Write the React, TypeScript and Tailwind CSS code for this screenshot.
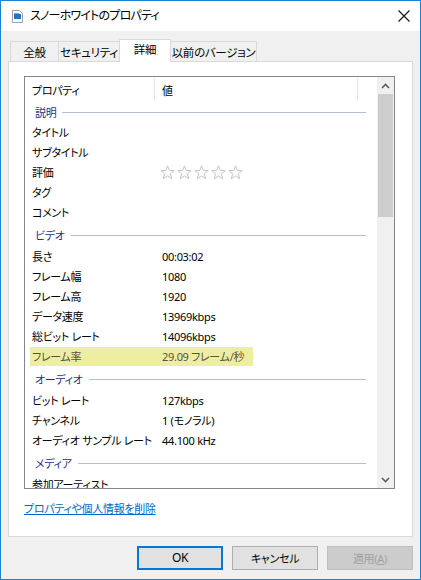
import React from 'react';

const font = "[font-family:'Noto_Sans','Noto_Sans_CJK_JP',sans-serif] [font-feature-settings:'palt']";

type Row =
  | { kind: 'group'; label: string; first?: boolean }
  | { kind: 'row'; label: string; value?: string; stars?: boolean; hl?: boolean };

const rows: Row[] = [
  { kind: 'group', label: '説明', first: true },
  { kind: 'row', label: 'タイトル' },
  { kind: 'row', label: 'サブタイトル' },
  { kind: 'row', label: '評価', stars: true },
  { kind: 'row', label: 'タグ' },
  { kind: 'row', label: 'コメント' },
  { kind: 'group', label: 'ビデオ' },
  { kind: 'row', label: '長さ', value: '00:03:02' },
  { kind: 'row', label: 'フレーム幅', value: '1080' },
  { kind: 'row', label: 'フレーム高', value: '1920' },
  { kind: 'row', label: 'データ速度', value: '13969kbps' },
  { kind: 'row', label: '総ビット レート', value: '14096kbps' },
  { kind: 'row', label: 'フレーム率', value: '29.09 フレーム/秒', hl: true },
  { kind: 'group', label: 'オーディオ' },
  { kind: 'row', label: 'ビット レート', value: '127kbps' },
  { kind: 'row', label: 'チャンネル', value: '1 (モノラル)' },
  { kind: 'row', label: 'オーディオ サンプル レート', value: '44.100 kHz' },
  { kind: 'group', label: 'メディア' },
  { kind: 'row', label: '参加アーティスト' },
];

function Star() {
  return (
    <svg width="15" height="15" viewBox="0 0 15 15">
      <polygon
        points="7.5,0.8 9.3,5.4 14.2,5.6 10.4,8.8 11.7,13.8 7.5,11 3.3,13.8 4.6,8.8 0.8,5.6 5.7,5.4"
        fill="#fafafa"
        stroke="#c6c6c6"
        strokeWidth="1"
      />
    </svg>
  );
}

function Chevron({ up }: { up?: boolean }) {
  return (
    <svg width="9" height="6" viewBox="0 0 9 6">
      <polyline
        points={up ? '1,5 4.5,1.5 8,5' : '1,1 4.5,4.5 8,1'}
        fill="none"
        stroke="#606060"
        strokeWidth="1.6"
      />
    </svg>
  );
}

function ListRow({ row }: { row: Row }) {
  if (row.kind === 'group') {
    return (
      <div className={`flex items-center ${row.first ? 'h-[20px]' : 'h-[24px] pt-[2px]'}`}>
        <span className="pl-[10px] text-[#1e3287]">{row.label}</span>
        <div className="ml-[6px] mr-[11px] h-px flex-1 bg-[#b4bfd6]" />
      </div>
    );
  }
  if (row.hl) {
    return (
      <div className="flex h-[20px] items-center">
        <div className="ml-[5px] flex h-[19px] w-[223px] items-center bg-[#eeeea2] text-[#55553a]">
          <span className="w-[125px] pl-[2px] whitespace-nowrap">{row.label}</span>
          <span className="pl-[7px] whitespace-nowrap">{row.value}</span>
        </div>
      </div>
    );
  }
  return (
    <div className="flex h-[20px] items-center pt-px text-black">
      <span className="w-[130px] pl-[7px] whitespace-nowrap">{row.label}</span>
      {row.stars ? (
        <span className="flex gap-[2px] pl-[5px]">
          <Star />
          <Star />
          <Star />
          <Star />
          <Star />
        </span>
      ) : (
        <span className="pl-[7px] whitespace-nowrap">{row.value}</span>
      )}
    </div>
  );
}

export default function App() {
  return (
    <div className={`${font} flex h-[580px] w-[421px] flex-col border border-[#1883d7] bg-[#f0f0f0] text-[11px] leading-none tracking-[-0.3px]`}>
      {/* title bar */}
      <div className="flex h-[30px] shrink-0 items-center bg-white">
        <svg className="ml-[11px]" width="11" height="13" viewBox="0 0 11 13">
          <path d="M0.5 0.5 H7.5 L10.5 3.5 V12.5 H0.5 Z" fill="#fff" stroke="#a0a0a0" />
          <rect x="2" y="4" width="7" height="5" fill="#1c74cc" />
          <rect x="2" y="3" width="5" height="1" fill="#63a5e6" />
        </svg>
        <span className="ml-[7px] text-[12px] tracking-[-0.8px] text-black">スノーホワイトのプロパティ</span>
        <svg className="ml-auto mr-[10px]" width="12" height="12" viewBox="0 0 12 12">
          <path d="M0.5 0.5 L11.5 11.5 M11.5 0.5 L0.5 11.5" stroke="#111" strokeWidth="1.1" />
        </svg>
      </div>

      {/* body */}
      <div className="flex flex-1 flex-col px-[7px] pt-[8px]">
        {/* tabs */}
        <div className="relative z-10 flex h-[22px] items-end pl-[2px] text-[11.5px]">
          <div className="flex h-[20px] w-[48px] items-center justify-center whitespace-nowrap border-l border-t border-[#d9d9d9] pt-[2px]">全般</div>
          <div className="flex h-[20px] w-[61px] items-center justify-center whitespace-nowrap border-l border-t border-[#d9d9d9] pt-[2px]">セキュリティ</div>
          <div className="-mb-px flex h-[23px] w-[52px] items-center justify-center whitespace-nowrap border-x border-t border-[#d9d9d9] bg-white pb-[2px]">詳細</div>
          <div className="flex h-[20px] w-[86px] items-center justify-center whitespace-nowrap border-r border-t border-[#d9d9d9] pt-[2px]">以前のバージョン</div>
        </div>

        {/* panel */}
        <div className="flex h-[476px] flex-col border border-[#d9d9d9] bg-white px-[15px] pt-[14px]">
          <div className="flex h-[413px] w-[371px] border border-[#828790]">
            <div className="flex-1 overflow-hidden">
              <div className="flex h-[25px] items-stretch">
                <div className="my-px flex w-[130px] items-center border-r border-[#e5e5e5] pl-[7px] pt-[2px]">プロパティ</div>
                <div className="my-px flex w-[203px] items-center border-r border-[#e5e5e5] pl-[7px] pt-[2px]">値</div>
              </div>
              {rows.map((r, i) => (
                <ListRow key={i} row={r} />
              ))}
            </div>
            <div className="flex w-[17px] flex-col bg-[#f0f0f0]">
              <div className="flex h-[17px] items-center justify-center">
                <Chevron up />
              </div>
              <div className="mx-px h-[123px] bg-[#cdcdcd]" />
              <div className="flex-1" />
              <div className="flex h-[17px] items-center justify-center">
                <Chevron />
              </div>
            </div>
          </div>
          <a className="mt-[14px] self-start text-[#0066cc] underline" href="#">
            プロパティや個人情報を削除
          </a>
        </div>

        {/* buttons */}
        <div className="mt-[9px] flex justify-end gap-[9px]">
          <button className="h-[24px] w-[86px] border-2 border-[#0078d7] bg-[#e1e1e1] text-[12px] text-black">OK</button>
          <button className="h-[24px] w-[86px] border border-[#adadad] bg-[#e1e1e1] text-black">キャンセル</button>
          <button className="h-[24px] w-[86px] border border-[#bfbfbf] bg-[#cccccc] text-[#a0a0a0]">
            適用(<span className="underline">A</span>)
          </button>
        </div>
      </div>
    </div>
  );
}
